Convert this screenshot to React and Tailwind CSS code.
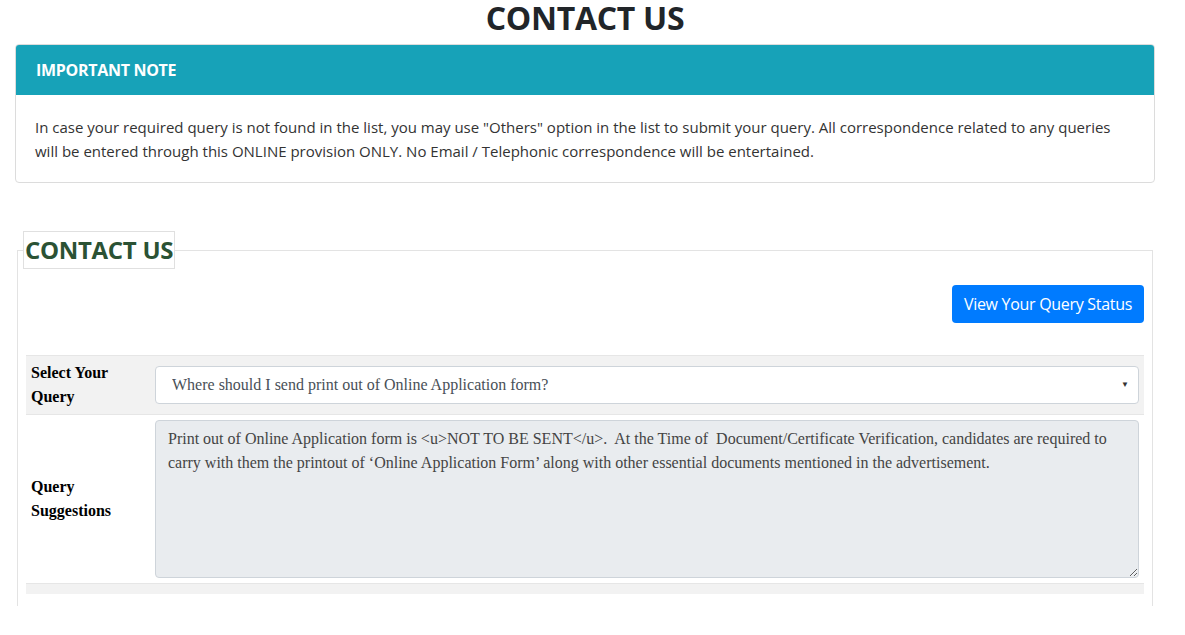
import { useState } from "react";

const sans = { fontFamily: '"Open Sans", "Noto Sans", sans-serif' };
const serif = { fontFamily: '"Liberation Serif", "Times New Roman", serif' };

const NOTE =
  'In case your required query is not found in the list, you may use "Others" option in the list to submit your query. All correspondence related to any queries will be entered through this ONLINE provision ONLY. No Email / Telephonic correspondence will be entertained.';

const SUGGESTION =
  "Print out of Online Application form is <u>NOT TO BE SENT</u>.  At the Time of  Document/Certificate Verification, candidates are required to carry with them the printout of \u2018Online Application Form\u2019 along with other essential documents mentioned in the advertisement.";

const App = () => {
  const [query, setQuery] = useState("print");

  return (
    <div className="bg-white w-[1185px] h-[635px] overflow-hidden text-[#212529]" style={sans}>
      <div className="w-[1170px]">
        <h1 className="text-center text-[32px] font-bold leading-[36px] h-[44px] tracking-[-0.3px]">
          CONTACT US
        </h1>

        <div className="mx-[15px] border border-[#dcdcdc] rounded-[4px] overflow-hidden">
          <div className="bg-[#17a2b8] h-[50px] px-[20px] flex items-center text-white font-bold text-[16px] tracking-[-0.3px]">
            IMPORTANT NOTE
          </div>
          <div className="px-[19px] pt-[20px] pb-[19px] text-[15px] leading-[24px] text-[#333]">
            {NOTE}
          </div>
        </div>

        <fieldset className="mt-[48px] ml-[17px] w-[1136px] h-[375px] border border-b-0 border-[#e3e3e3] px-[8px]">
          <legend className="ml-[-3px] px-[1px] border border-[#e0e0e0] text-[#2b5234] font-bold text-[24px] leading-[36px] tracking-[-0.3px]">
            CONTACT US
          </legend>

          <div className="flex justify-end pt-[16px] pb-[32px]">
            <button className="bg-[#007bff] text-white rounded-[4px] h-[38px] px-[12px] text-[16px] tracking-[-0.3px]">
              View Your Query Status
            </button>
          </div>

          <div style={serif} className="text-[16px] text-black">
            <div className="flex items-center bg-[#f2f2f2] h-[59px] border-t border-[#e6e6e6]">
              <div className="w-[129px] pl-[5px] font-bold leading-[24px]">
                Select Your
                <br />
                Query
              </div>
              <div className="relative flex-1 mr-[5px]">
                <select
                  value={query}
                  onChange={(e) => setQuery(e.target.value)}
                  className="appearance-none w-full h-[38px] bg-white border border-[#ced4da] rounded-[4px] pl-[16px] pr-[30px] text-[#495057] text-[16px]"
                  style={serif}
                >
                  <option value="print">Where should I send print out of Online Application form?</option>
                  <option value="others">Others</option>
                </select>
                <span className="absolute right-[10px] top-[13px] text-[8px] text-[#333] pointer-events-none">&#9660;</span>
              </div>
            </div>

            <div className="flex items-center h-[169px] border-t border-[#e6e6e6]">
              <div className="w-[129px] pl-[5px] font-bold leading-[24px]">
                Query
                <br />
                Suggestions
              </div>
              <textarea
                readOnly
                value={SUGGESTION}
                className="flex-1 mr-[5px] h-[158px] bg-[#e9ecef] border border-[#ced4da] rounded-[4px] px-[12px] py-[6px] text-[16px] leading-[24px] text-[#444] resize-y"
                style={serif}
              />
            </div>

            <div className="bg-[#f2f2f2] h-[11px] border-t border-[#e6e6e6]" />
          </div>
        </fieldset>
      </div>
    </div>
  );
};

export default App;
